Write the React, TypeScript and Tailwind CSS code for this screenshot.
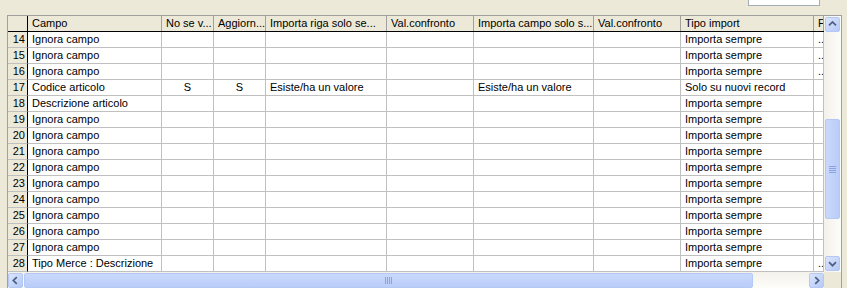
import React from 'react';

const COLS = [
  { title: 'Campo', w: 'w-[134px]', center: false },
  { title: 'No se v...', w: 'w-[52px]', center: true },
  { title: 'Aggiorn...', w: 'w-[52px]', center: true },
  { title: 'Importa riga solo se...', w: 'w-[121px]', center: false },
  { title: 'Val.confronto', w: 'w-[87px]', center: false },
  { title: 'Importa campo solo s...', w: 'w-[120px]', center: false },
  { title: 'Val.confronto', w: 'w-[87px]', center: false },
  { title: 'Tipo import', w: 'w-[133px]', center: false },
  { title: 'P', w: 'w-[10px]', center: false },
];

const SEMPRE = 'Importa sempre';

const ROWS: { n: number; cells: string[] }[] = [
  { n: 14, cells: ['Ignora campo', '', '', '', '', '', '', SEMPRE, '..'] },
  { n: 15, cells: ['Ignora campo', '', '', '', '', '', '', SEMPRE, '..'] },
  { n: 16, cells: ['Ignora campo', '', '', '', '', '', '', SEMPRE, '..'] },
  {
    n: 17,
    cells: ['Codice articolo', 'S', 'S', 'Esiste/ha un valore', '', 'Esiste/ha un valore', '', 'Solo su nuovi record', ''],
  },
  { n: 18, cells: ['Descrizione articolo', '', '', '', '', '', '', SEMPRE, ''] },
  ...[19, 20, 21, 22, 23, 24, 25, 26, 27].map((n) => ({
    n,
    cells: ['Ignora campo', '', '', '', '', '', '', SEMPRE, ''],
  })),
  { n: 28, cells: ['Tipo Merce : Descrizione', '', '', '', '', '', '', SEMPRE, '..'] },
];

function Chevron({ dir }: { dir: 'up' | 'down' | 'left' | 'right' }) {
  const paths = {
    up: 'M3.5 8.5 L7.5 4.5 L11.5 8.5',
    down: 'M3.5 6 L7.5 10 L11.5 6',
    left: 'M9 3.5 L5 7.5 L9 11.5',
    right: 'M6 3.5 L10 7.5 L6 11.5',
  };
  return (
    <svg width="15" height="15" viewBox="0 0 15 15">
      <path d={paths[dir]} fill="none" stroke="#4d6185" strokeWidth="2" />
    </svg>
  );
}

function ScrollButton({ dir }: { dir: 'up' | 'down' | 'left' | 'right' }) {
  return (
    <div className="flex h-[15px] w-[15px] items-center justify-center rounded-[2px] border border-[#b4c8f6] bg-gradient-to-br from-[#dbe5fd] to-[#b5c9f6]">
      <Chevron dir={dir} />
    </div>
  );
}

export default function App() {
  return (
    <div
      className="h-[288px] w-[847px] overflow-hidden bg-[#ece9d8] text-[11px] leading-[15px] text-black"
      style={{ fontFamily: '"Liberation Sans", Arial, sans-serif' }}
    >
      <div className="flex h-[15px] justify-end pr-[27px]">
        <div className="h-[6px] w-[72px] border-b border-l border-r border-[#a5acb5] bg-white" />
      </div>

      <div className="ml-[7px] flex h-[273px] w-[835px] flex-col border-l border-r border-t border-[#a0a0a0]">
        <div className="flex h-[256px]">
          {/* table */}
          <div className="flex w-[816px] flex-col overflow-hidden bg-white">
            <div className="flex h-[16px] border-b border-black bg-[#ece9d8]">
              <div className="h-[15px] w-[20px] shrink-0 border-r border-black" />
              {COLS.map((c, i) => (
                <div
                  key={i}
                  className={`${c.w} h-[15px] shrink-0 overflow-hidden whitespace-nowrap border-r border-[#a0a0a0] pl-[4px]`}
                >
                  {c.title}
                </div>
              ))}
            </div>
            {ROWS.map((r) => (
              <div key={r.n} className="flex h-[16px]">
                <div className="h-[16px] w-[20px] shrink-0 border-b border-r border-b-[#c0c0c0] border-r-black bg-[#ece9d8] pr-[2px] text-right">
                  {r.n}
                </div>
                {r.cells.map((v, i) => (
                  <div
                    key={i}
                    className={`${COLS[i].w} h-[16px] shrink-0 overflow-hidden whitespace-nowrap border-b border-r border-[#c0c0c0] ${
                      COLS[i].center ? 'text-center' : 'pl-[4px]'
                    }`}
                  >
                    {v}
                  </div>
                ))}
              </div>
            ))}
          </div>

          {/* vertical scrollbar */}
          <div className="flex w-[17px] flex-col bg-gradient-to-r from-[#f3f1ea] to-[#fdfdfa] pl-[1px] pr-[1px] pt-[1px]">
            <ScrollButton dir="up" />
            <div className="flex-1">
              <div className="mt-[87px] flex h-[100px] w-[15px] items-center justify-center rounded-[2px] border border-[#b4c8f6] bg-gradient-to-r from-[#cad8fc] to-[#b9cdf8]">
                <div className="flex flex-col gap-[1px]">
                  <div className="h-[1px] w-[7px] bg-[#8ba2e0]" />
                  <div className="h-[1px] w-[7px] bg-[#8ba2e0]" />
                  <div className="h-[1px] w-[7px] bg-[#8ba2e0]" />
                  <div className="h-[1px] w-[7px] bg-[#8ba2e0]" />
                </div>
              </div>
            </div>
            <div className="mb-[1px]">
              <ScrollButton dir="down" />
            </div>
          </div>
        </div>

        {/* horizontal scrollbar */}
        <div className="flex h-[16px]">
          <div className="flex w-[816px] items-center bg-gradient-to-b from-[#f3f1ea] to-[#fdfdfa] px-[0px] pt-[1px]">
            <ScrollButton dir="left" />
            <div className="flex flex-1 px-[1px]">
              <div className="flex h-[15px] w-[729px] items-center justify-center rounded-[2px] border border-[#b4c8f6] bg-gradient-to-b from-[#cad8fc] to-[#b9cdf8]">
                <div className="flex gap-[1px]">
                  <div className="h-[7px] w-[1px] bg-[#8ba2e0]" />
                  <div className="h-[7px] w-[1px] bg-[#8ba2e0]" />
                  <div className="h-[7px] w-[1px] bg-[#8ba2e0]" />
                  <div className="h-[7px] w-[1px] bg-[#8ba2e0]" />
                </div>
              </div>
            </div>
            <ScrollButton dir="right" />
          </div>
          <div className="w-[17px] bg-[#ece9d8]" />
        </div>
      </div>
    </div>
  );
}
